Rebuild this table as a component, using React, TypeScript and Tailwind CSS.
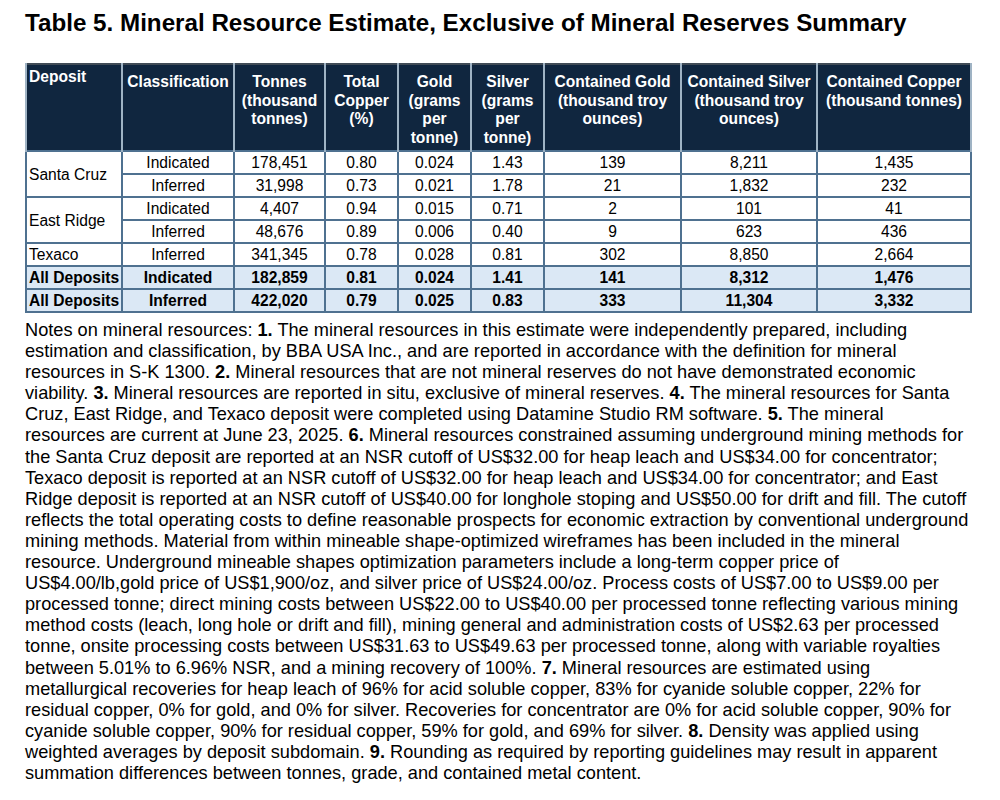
const headers = [
  "Deposit",
  "Classification",
  "Tonnes (thousand tonnes)",
  "Total Copper (%)",
  "Gold (grams per tonne)",
  "Silver (grams per tonne)",
  "Contained Gold (thousand troy ounces)",
  "Contained Silver (thousand troy ounces)",
  "Contained Copper (thousand tonnes)",
];

const widths = ["w-[96px]", "w-[112px]", "w-[91px]", "w-[73px]", "w-[73px]", "w-[73px]", "w-[137px]", "w-[136px]", "w-[154px]"];

const rows = [
  { deposit: "Santa Cruz", span: 2, cells: ["Indicated", "178,451", "0.80", "0.024", "1.43", "139", "8,211", "1,435"] },
  { cells: ["Inferred", "31,998", "0.73", "0.021", "1.78", "21", "1,832", "232"] },
  { deposit: "East Ridge", span: 2, cells: ["Indicated", "4,407", "0.94", "0.015", "0.71", "2", "101", "41"] },
  { cells: ["Inferred", "48,676", "0.89", "0.006", "0.40", "9", "623", "436"] },
  { deposit: "Texaco", span: 1, cells: ["Inferred", "341,345", "0.78", "0.028", "0.81", "302", "8,850", "2,664"] },
];

const totals = [
  ["All Deposits", "Indicated", "182,859", "0.81", "0.024", "1.41", "141", "8,312", "1,476"],
  ["All Deposits", "Inferred", "422,020", "0.79", "0.025", "0.83", "333", "11,304", "3,332"],
];

// bold note numbers are wrapped in an array
const notes: (string | [string])[] = [
  "Notes on mineral resources: ", ["1."], " The mineral resources in this estimate were independently prepared, including\n",
  "estimation and classification, by BBA USA Inc., and are reported in accordance with the definition for mineral\n",
  "resources in S-K 1300. ", ["2."], " Mineral resources that are not mineral reserves do not have demonstrated economic\n",
  "viability. ", ["3."], " Mineral resources are reported in situ, exclusive of mineral reserves. ", ["4."], " The mineral resources for Santa\n",
  "Cruz, East Ridge, and Texaco deposit were completed using Datamine Studio RM software. ", ["5."], " The mineral\n",
  "resources are current at June 23, 2025. ", ["6."], " Mineral resources constrained assuming underground mining methods for\n",
  "the Santa Cruz deposit are reported at an NSR cutoff of US$32.00 for heap leach and US$34.00 for concentrator;\n",
  "Texaco deposit is reported at an NSR cutoff of US$32.00 for heap leach and US$34.00 for concentrator; and East\n",
  "Ridge deposit is reported at an NSR cutoff of US$40.00 for longhole stoping and US$50.00 for drift and fill. The cutoff\n",
  "reflects the total operating costs to define reasonable prospects for economic extraction by conventional underground\n",
  "mining methods. Material from within mineable shape-optimized wireframes has been included in the mineral\n",
  "resource. Underground mineable shapes optimization parameters include a long-term copper price of\n",
  "US$4.00/lb,gold price of US$1,900/oz, and silver price of US$24.00/oz. Process costs of US$7.00 to US$9.00 per\n",
  "processed tonne; direct mining costs between US$22.00 to US$40.00 per processed tonne reflecting various mining\n",
  "method costs (leach, long hole or drift and fill), mining general and administration costs of US$2.63 per processed\n",
  "tonne, onsite processing costs between US$31.63 to US$49.63 per processed tonne, along with variable royalties\n",
  "between 5.01% to 6.96% NSR, and a mining recovery of 100%. ", ["7."], " Mineral resources are estimated using\n",
  "metallurgical recoveries for heap leach of 96% for acid soluble copper, 83% for cyanide soluble copper, 22% for\n",
  "residual copper, 0% for gold, and 0% for silver. Recoveries for concentrator are 0% for acid soluble copper, 90% for\n",
  "cyanide soluble copper, 90% for residual copper, 59% for gold, and 69% for silver. ", ["8."], " Density was applied using\n",
  "weighted averages by deposit subdomain. ", ["9."], " Rounding as required by reporting guidelines may result in apparent\n",
  "summation differences between tonnes, grade, and contained metal content.",
];

const cell = "border-2 border-[#4f7190] h-[23px] p-0 leading-[19px] text-center whitespace-nowrap overflow-hidden";

export default function App() {
  return (
    <div className="w-[1000px] h-[800px] bg-white text-black font-['Liberation_Sans',Arial,sans-serif] overflow-hidden">
      <h1 className="pl-[25px] pt-[9px] text-[24.2px] leading-[28px] font-bold">
        Table 5. Mineral Resource Estimate, Exclusive of Mineral Reserves Summary
      </h1>
      <div className="pl-[25px] pt-[26px]">
        <table className="border-collapse table-fixed w-[945px] text-[15.6px] border-2 border-[#404b56]">
          <thead>
            <tr className="bg-[#10263f] text-white h-[87px]">
              {headers.map((h, i) => (
                <th
                  key={h}
                  className={`${widths[i]} align-top font-bold leading-[18.5px] border-x-2 border-[#9fb3c4] ${
                    i === 0 ? "text-left pl-[2px] pt-[3px]" : "text-center pt-[8px] px-[1px]"
                  }`}
                >
                  {h}
                </th>
              ))}
            </tr>
          </thead>
          <tbody>
            {rows.map((r, ri) => (
              <tr key={ri}>
                {r.deposit && (
                  <td rowSpan={r.span} className={`${cell} text-left pl-[2px]`}>
                    {r.deposit}
                  </td>
                )}
                {r.cells.map((c, ci) => (
                  <td key={ci} className={cell}>
                    {c}
                  </td>
                ))}
              </tr>
            ))}
            {totals.map((t, ti) => (
              <tr key={ti} className="bg-[#dbe8f5] font-bold">
                {t.map((c, ci) => (
                  <td key={ci} className={`${cell} ${ci === 0 ? "text-left pl-[2px]" : ""}`}>
                    {c}
                  </td>
                ))}
              </tr>
            ))}
          </tbody>
        </table>
      </div>
      <p className="pl-[25px] pt-[7px] text-[18.2px] leading-[21.1px] whitespace-pre">
        {notes.map((n, i) => (typeof n === "string" ? n : <b key={i}>{n[0]}</b>))}
      </p>
    </div>
  );
}
